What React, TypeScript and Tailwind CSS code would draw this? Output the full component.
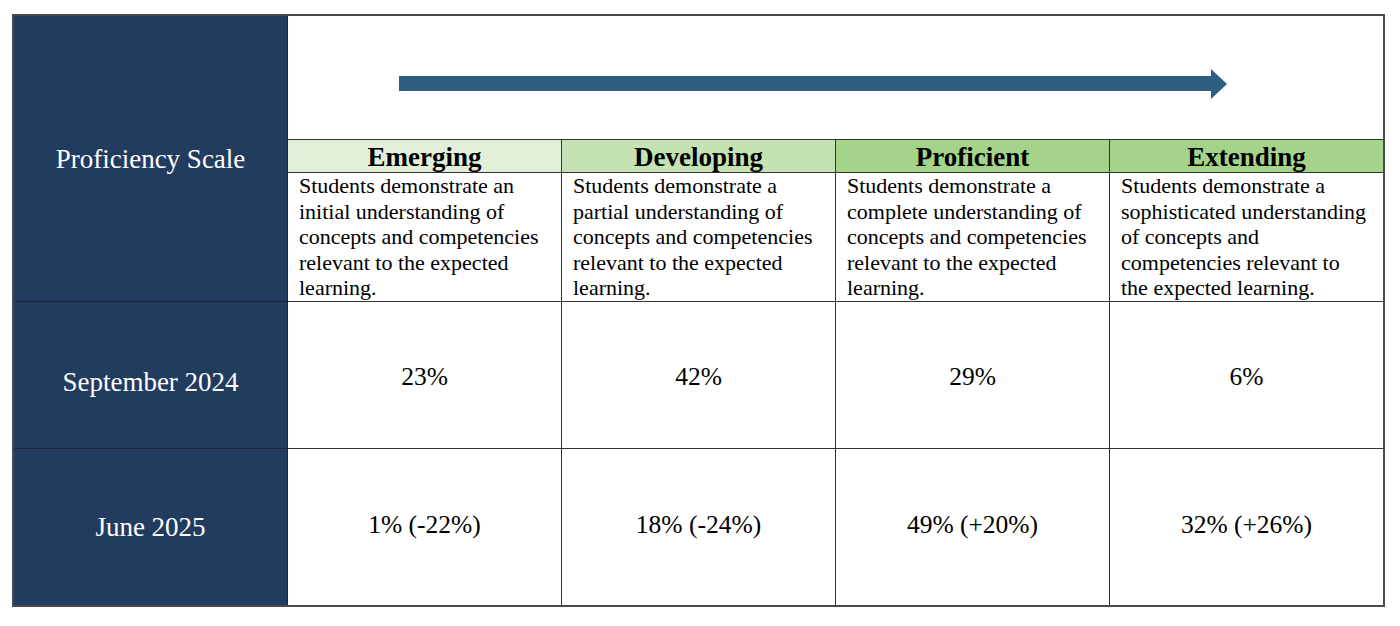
import React from 'react';

const levels = [
  {
    name: 'Emerging',
    bg: 'bg-[#e2f0d9]',
    text: 'Students demonstrate an initial understanding of concepts and competencies relevant to the expected learning.',
  },
  {
    name: 'Developing',
    bg: 'bg-[#c5e2b2]',
    text: 'Students demonstrate a partial understanding of concepts and competencies relevant to the expected learning.',
  },
  {
    name: 'Proficient',
    bg: 'bg-[#a5d38a]',
    text: 'Students demonstrate a complete understanding of concepts and competencies relevant to the expected learning.',
  },
  {
    name: 'Extending',
    bg: 'bg-[#a5d38a]',
    text: 'Students demonstrate a sophisticated understanding of concepts and competencies relevant to the expected learning.',
  },
];

const rows = [
  { label: 'September 2024', values: ['23%', '42%', '29%', '6%'], pad: 'pt-[14px]', vpad: 'pt-[5px]' },
  { label: 'June 2025', values: ['1% (-22%)', '18% (-24%)', '49% (+20%)', '32% (+26%)'], pad: 'pt-0', vpad: 'pb-[4px]' },
];

function App() {
  return (
    <div className="w-[1400px] h-[626px] bg-white pt-[14px] pl-[12px] font-[family-name:'Liberation_Serif',serif] text-black">
      <div className="grid grid-cols-[274px_274px_274px_274px_273px] grid-rows-[124px_33px_129px_147px_156px] w-[1373px] border-2 border-[#4a4a4a]">
        {/* Scale label */}
        <div className="row-span-3 bg-[#223c5f] border-r border-b border-[#1c2533] flex items-center justify-center pt-[2px]">
          <span className="text-white text-[27px]">Proficiency Scale</span>
        </div>

        {/* Arrow */}
        <div className="col-span-4 border-b border-[#333] pl-[111px] pt-[52px]">
          <svg width="830" height="32" viewBox="0 0 830 32" className="block">
            <rect x="0" y="8" width="814" height="15" fill="#2e5e80" />
            <polygon points="812,1 828,16 812,31" fill="#2e5e80" />
          </svg>
        </div>

        {/* Level headers */}
        {levels.map((l, i) => (
          <div
            key={l.name}
            className={`${l.bg} border-b border-[#333] ${i < 3 ? 'border-r' : ''} flex items-center justify-center pt-[2px]`}
          >
            <span className="text-[27px] font-bold leading-none">{l.name}</span>
          </div>
        ))}

        {/* Descriptions */}
        {levels.map((l, i) => (
          <div
            key={l.name + '-d'}
            className={`border-b border-[#333] ${i < 3 ? 'border-r' : ''} pl-[11px] pr-[13px] text-[22px] leading-[25.5px]`}
          >
            {l.text}
          </div>
        ))}

        {/* Data rows */}
        {rows.map((r, ri) => (
          <React.Fragment key={r.label}>
            <div
              className={`bg-[#223c5f] border-r border-[#1c2533] ${ri === 0 ? 'border-b' : ''} ${r.pad} flex items-center justify-center`}
            >
              <span className="text-white text-[27px]">{r.label}</span>
            </div>
            {r.values.map((v, i) => (
              <div
                key={v}
                className={`${ri === 0 ? 'border-b' : ''} border-[#333] ${i < 3 ? 'border-r' : ''} ${r.vpad} flex items-center justify-center`}
              >
                <span className="text-[25.5px]">{v}</span>
              </div>
            ))}
          </React.Fragment>
        ))}
      </div>
    </div>
  );
}

export default App;
